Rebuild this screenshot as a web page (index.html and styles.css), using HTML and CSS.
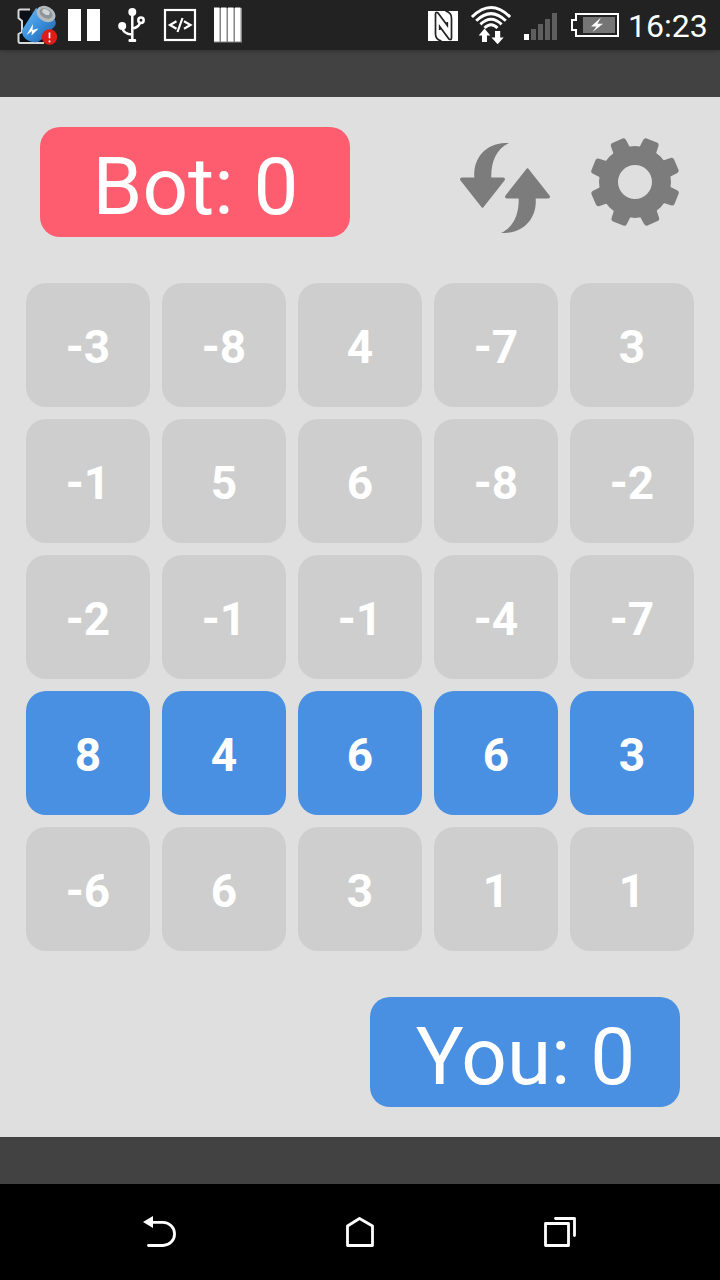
FILE: index.html
```html
<!DOCTYPE html>
<html lang="en">
<head>
<meta charset="utf-8">
<title>Bot vs You</title>
<link rel="stylesheet" href="styles.css">
</head>
<body>
<div class="screen">
  <header class="status">
    <svg class="status-icons" width="260" height="50" viewBox="0 0 260 50">
      <defs>
        <linearGradient id="cell" x1="0" y1="0" x2="1" y2="1">
          <stop offset="0" stop-color="#68bcf5"/><stop offset=".5" stop-color="#3a8fdc"/><stop offset="1" stop-color="#1f5c9f"/>
        </linearGradient>
      </defs>
      <path d="M30 9.500H20Q18.500 9.500 18.500 11V18L22 21V32L18.500 34V41Q18.500 43 20 43H44" fill="#0b1016" stroke="#d8d8d8" stroke-width="2"/>
      <path d="M36 8L55 20Q57 24 54 27L41 40Q37 44 29 41Q21 37 22 30Z" fill="url(#cell)"/>
      <ellipse cx="46" cy="14" rx="10" ry="7.500" transform="rotate(28 46 14)" fill="#b4babe"/>
      <ellipse cx="46" cy="13.500" rx="7" ry="4.500" transform="rotate(28 46 13.500)" fill="#8e9498"/>
      <ellipse cx="46" cy="12" rx="4" ry="2.500" transform="rotate(28 46 12)" fill="#d0d4d6"/>
      <path d="M33 24L26.500 35L32 31L31.500 35.500L38.500 28.500L32.500 30Z" fill="#fff"/>
      <circle cx="49.500" cy="37" r="7.700" fill="#dc1e19"/>
      <path d="M49.500 32.500V38.300M49.500 40.500V42.300" stroke="#fff" stroke-width="1.700"/>
      <path d="M68 9H81V41H68ZM87 9H100V41H87Z" fill="#fff"/>
      <g fill="none" stroke="#fff" stroke-width="2.500">
        <path d="M132.300 12V41M122.300 27Q123 34 132 34.500M132 28.500Q138 28 140 23"/>
        <circle cx="141" cy="20.300" r="2.700"/>
      </g>
      <circle cx="132.300" cy="12" r="4" fill="#fff"/>
      <circle cx="122.200" cy="26" r="4" fill="#fff"/>
      <rect x="128.500" y="39" width="7.700" height="3" rx="1" fill="#fff"/>
      <rect x="165" y="10" width="30" height="30" fill="none" stroke="#fff" stroke-width="2.200"/>
      <path d="M176.500 21.300L170 25L176.500 28.700M184 21.300L190.500 25L184 28.700M182.500 18L177.500 32" fill="none" stroke="#fff" stroke-width="2.200"/>
      <path d="M214 8H242V42.500H214Z" fill="#858585"/>
      <path d="M214 7.500H219.500V41.500H214ZM221 7.500H226.500V41.500H221ZM228 7.500H233.500V41.500H228ZM235 7.500H240.500V41.500H235Z" fill="#fff"/>
    </svg>
    <svg class="status-icons" width="200" height="50" viewBox="424 0 200 50">
      <path d="M428 11H458V41H428Z" fill="#fff"/>
      <g fill="none" stroke="#222" stroke-width="1.700">
        <path id="band" d="M441.500 41Q435.500 39.500 435.500 34V14Q435.500 11.500 438 13L447.300 25.500V22"/>
        <use href="#band" transform="rotate(180 443.500 26)"/>
      </g>
      <g fill="none" stroke="#fff" stroke-width="2.900">
        <path d="M471.900 17Q491 -2 510.100 17"/>
        <path d="M476.200 20.800Q491 6.400 505.800 20.800"/>
        <path d="M480.400 24.400Q491 14.200 501.600 24.400"/>
        <path d="M484.500 28Q491 21.500 497.500 28"/>
      </g>
      <path d="M484.500 28.500L490.300 35.500H487V42H482V35.500H478.700ZM497.600 44.300L491.500 37.500H495V31H500.200V37.500H503.700Z" fill="#fff"/>
      <rect x="524" y="34" width="5" height="6" fill="#fff"/>
      <path d="M531 29h5v11h-5zM538 24h5v16h-5zM545 19h5v21h-5zM552 13h5v27h-5z" fill="#5e5e5e"/>
      <path d="M576 14H618V36H576V30H572V20H576Z" fill="none" stroke="#fff" stroke-width="2"/>
      <rect x="583" y="17" width="32" height="16" fill="#757575"/>
      <path d="M601 17.500L591 26.500H596.500L592.500 32L603 23.700H597.500Z" fill="#fff"/>
    </svg>
    <span class="clock">16:23</span>
  </header>

  <main class="game">
    <div class="top">
      <div class="score bot">Bot: 0</div>
      <div class="actions">
        <svg width="90" height="90" viewBox="460 143 90 90" fill="#7c7c7c">
          <path id="arrow" d="M509 143C486 142 473 158 474.300 177.500H462Q459 178 460.500 180.500L481 206.500Q482.500 209 484 206.500L504.500 180.500Q506 178 503 177.500H491.300C491 162 496 149 509 143Z"/>
          <use href="#arrow" transform="rotate(180 505 188)"/>
        </svg>
        <svg width="90" height="90" viewBox="-45 -45 90 90">
          <defs><path id="tooth" d="M-9 -32L-8.200 -42Q-8 -44.800 -5.500 -44.800H5.500Q8 -44.800 8.200 -42L9 -32Z"/></defs>
          <g fill="#7c7c7c">
            <path fill-rule="evenodd" d="M0 -36A36 36 0 1 1 0 36A36 36 0 1 1 0 -36ZM0 -17A17 17 0 1 0 0 17A17 17 0 1 0 0 -17Z"/>
            <use href="#tooth" transform="rotate(22)"/>
            <use href="#tooth" transform="rotate(67)"/>
            <use href="#tooth" transform="rotate(112)"/>
            <use href="#tooth" transform="rotate(157)"/>
            <use href="#tooth" transform="rotate(202)"/>
            <use href="#tooth" transform="rotate(247)"/>
            <use href="#tooth" transform="rotate(292)"/>
            <use href="#tooth" transform="rotate(337)"/>
          </g>
        </svg>
      </div>
    </div>

    <div class="board">
      <div class="tile">-3</div><div class="tile">-8</div><div class="tile">4</div><div class="tile">-7</div><div class="tile">3</div>
      <div class="tile">-1</div><div class="tile">5</div><div class="tile">6</div><div class="tile">-8</div><div class="tile">-2</div>
      <div class="tile">-2</div><div class="tile">-1</div><div class="tile">-1</div><div class="tile">-4</div><div class="tile">-7</div>
      <div class="tile active">8</div><div class="tile active">4</div><div class="tile active">6</div><div class="tile active">6</div><div class="tile active">3</div>
      <div class="tile">-6</div><div class="tile">6</div><div class="tile">3</div><div class="tile">1</div><div class="tile">1</div>
    </div>

    <div class="score you">You: 0</div>
  </main>

  <nav class="navbar">
    <svg width="720" height="96" viewBox="0 1184 720 96" fill="none" stroke="#fff" stroke-width="2.800" stroke-linecap="round" stroke-linejoin="round">
      <path d="M152 1222.300H163A11.600 11.600 0 0 1 163 1245.500H148.500"/>
      <path d="M143 1222L153 1216V1228Z" fill="#fff" stroke="none"/>
      <path d="M347.500 1226L359.500 1218.500L372.500 1226V1245.500H347.500Z"/>
      <path d="M545.500 1223.500H568.500V1245.500H545.500ZM555.500 1218.500H574.500V1235.500"/>
    </svg>
  </nav>
</div>
</body>
</html>
```
FILE: styles.css
```css
body {
  margin: 0;
  font-family: Roboto, sans-serif;
  color: #fff;
}

.screen {
  display: flex;
  flex-direction: column;
  width: 720px;
  height: 1280px;
  background: #424242;
}

.status {
  display: flex;
  height: 50px;
  margin-bottom: 47px;
  background: #222;
  box-shadow: 0 1px 4px #303030;
}

.status-icons {
  display: block;
  flex: none;
}

.status-icons + .status-icons {
  margin-left: 164px;
}

.clock {
  margin-left: 4px;
  font-size: 32px;
  line-height: 53px;
}

.game {
  display: flex;
  flex-direction: column;
  height: 1040px;
  padding: 30px 26px;
  box-sizing: border-box;
  background: #dfdfdf;
}

.top {
  display: flex;
  justify-content: space-between;
  align-items: center;
  padding: 0 14px;
}

.score {
  width: 310px;
  height: 110px;
  border-radius: 20px;
  font-size: 80px;
  line-height: 120px;
  text-align: center;
  text-indent: 1px;
}

.bot {
  background: #fe5d70;
}

.you {
  align-self: flex-end;
  margin: 46px 14px 0 0;
  background: #4a90e2;
}

.actions {
  display: flex;
  gap: 40px;
}

.actions svg {
  display: block;
}

.actions svg:first-child {
  margin-top: 6px;
  margin-bottom: -6px;
}

.board {
  display: grid;
  grid-template-columns: repeat(5, 124px);
  grid-auto-rows: 124px;
  gap: 12px;
  margin-top: 46px;
}

.tile {
  border-radius: 20px;
  background: #cecece;
  font-size: 46px;
  font-weight: 700;
  line-height: 128px;
  text-align: center;
}

.active {
  background: #4a90e2;
}

.navbar {
  height: 96px;
  margin-top: 47px;
  background: #000;
}

.navbar svg {
  display: block;
}
```
